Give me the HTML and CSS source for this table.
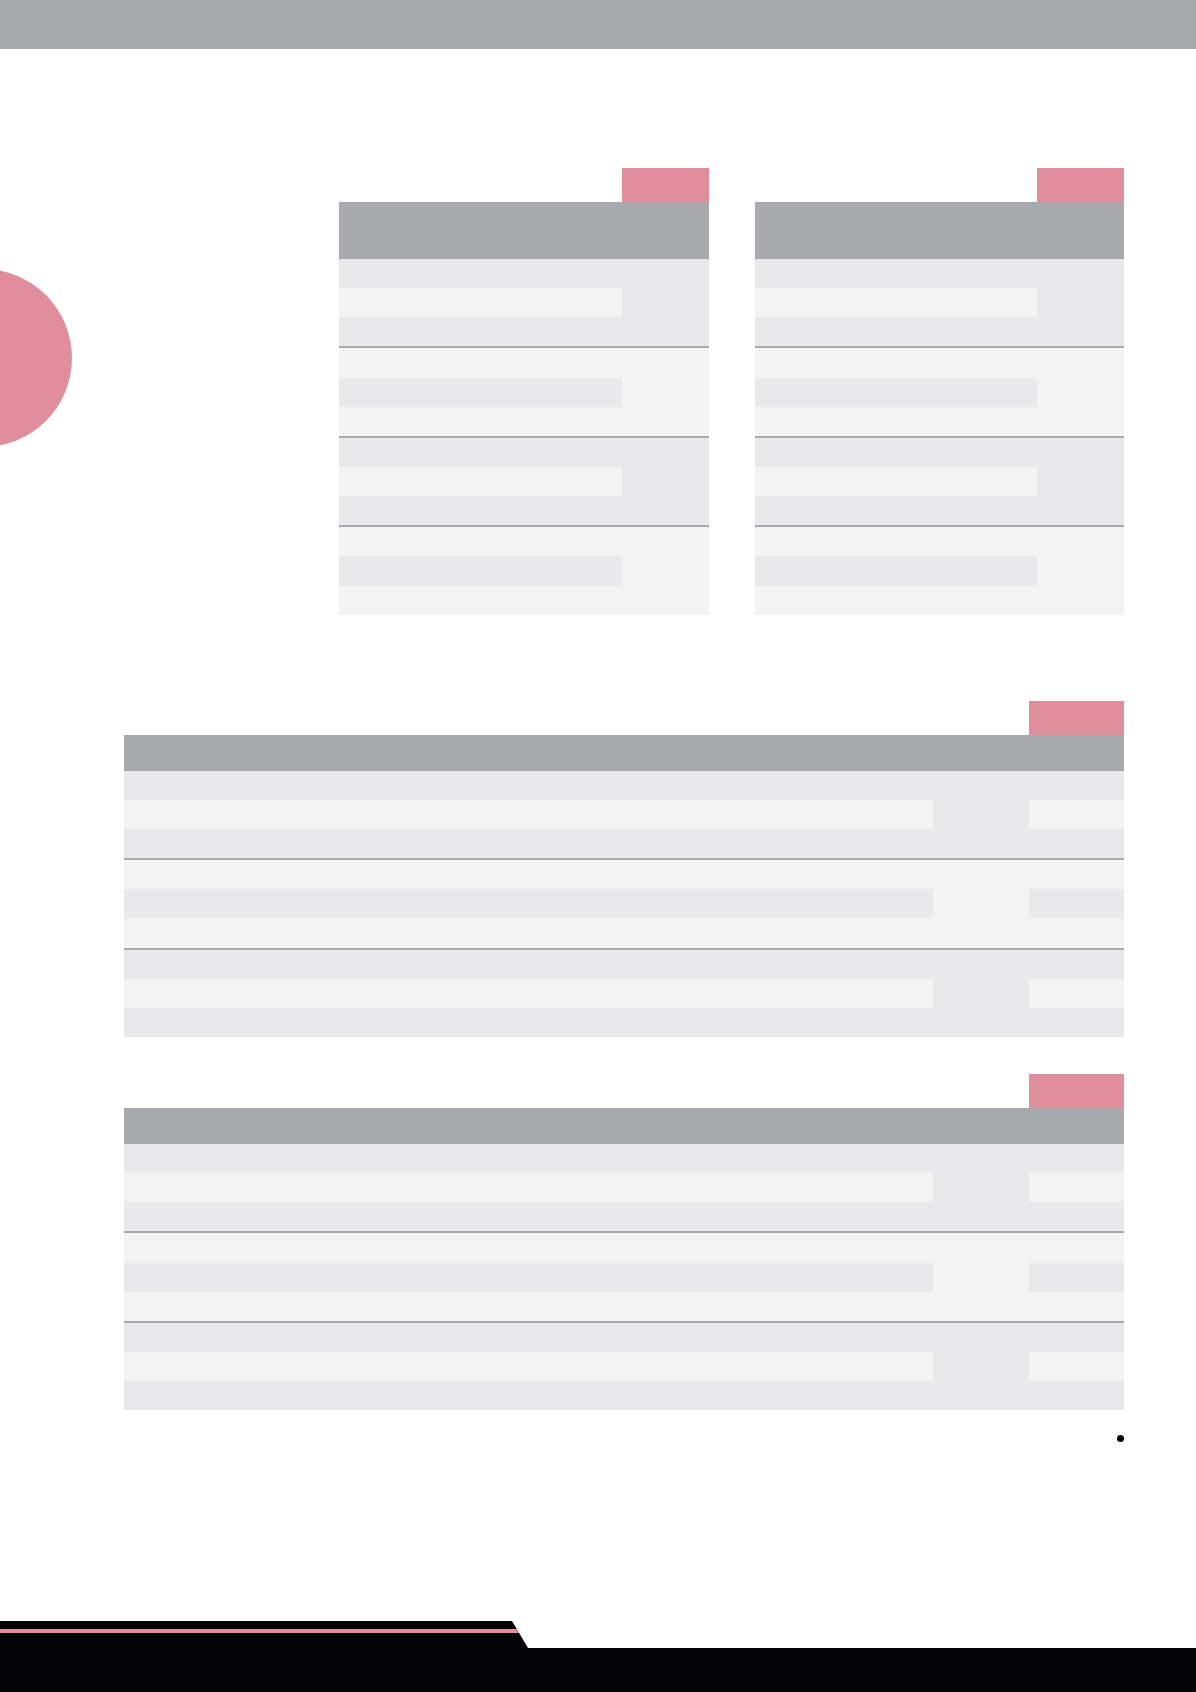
FILE: index.html
```html
<!DOCTYPE html>
<html lang="en">
<head>
<meta charset="utf-8">
<title>Tables</title>
<link rel="stylesheet" href="styles.css">
</head>
<body>
<div class="page">
  <div class="topbar"></div>
  <div class="blob"></div>

  <section class="pair">
    <div class="tbl small">
      <div class="tabrow"><div class="tab"></div></div>
      <div class="thead"></div>
      <div class="tbody">
        <div class="grp dark"><div class="row"></div><div class="row mid"><div class="c alt"></div><div class="c"></div></div><div class="row"></div></div>
        <div class="grp light"><div class="row"></div><div class="row mid"><div class="c alt"></div><div class="c"></div></div><div class="row"></div></div>
        <div class="grp dark"><div class="row"></div><div class="row mid"><div class="c alt"></div><div class="c"></div></div><div class="row"></div></div>
        <div class="grp light"><div class="row"></div><div class="row mid"><div class="c alt"></div><div class="c"></div></div><div class="row"></div></div>
      </div>
    </div>
    <div class="tbl small">
      <div class="tabrow"><div class="tab"></div></div>
      <div class="thead"></div>
      <div class="tbody">
        <div class="grp dark"><div class="row"></div><div class="row mid"><div class="c alt"></div><div class="c"></div></div><div class="row"></div></div>
        <div class="grp light"><div class="row"></div><div class="row mid"><div class="c alt"></div><div class="c"></div></div><div class="row"></div></div>
        <div class="grp dark"><div class="row"></div><div class="row mid"><div class="c alt"></div><div class="c"></div></div><div class="row"></div></div>
        <div class="grp light"><div class="row"></div><div class="row mid"><div class="c alt"></div><div class="c"></div></div><div class="row"></div></div>
      </div>
    </div>
  </section>

  <section class="wide first">
    <div class="tbl large">
      <div class="tabrow"><div class="tab"></div></div>
      <div class="thead"></div>
      <div class="tbody">
        <div class="grp dark"><div class="row"></div><div class="row mid"><div class="c alt"></div><div class="c"></div><div class="c alt"></div></div><div class="row"></div></div>
        <div class="grp light"><div class="row"></div><div class="row mid"><div class="c alt"></div><div class="c"></div><div class="c alt"></div></div><div class="row"></div></div>
        <div class="grp dark"><div class="row"></div><div class="row mid"><div class="c alt"></div><div class="c"></div><div class="c alt"></div></div><div class="row"></div></div>
      </div>
    </div>
  </section>

  <section class="wide second">
    <div class="tbl large">
      <div class="tabrow"><div class="tab"></div></div>
      <div class="thead"></div>
      <div class="tbody">
        <div class="grp dark"><div class="row"></div><div class="row mid"><div class="c alt"></div><div class="c"></div><div class="c alt"></div></div><div class="row"></div></div>
        <div class="grp light"><div class="row"></div><div class="row mid"><div class="c alt"></div><div class="c"></div><div class="c alt"></div></div><div class="row"></div></div>
        <div class="grp dark"><div class="row"></div><div class="row mid"><div class="c alt"></div><div class="c"></div><div class="c alt"></div></div><div class="row"></div></div>
      </div>
    </div>
  </section>

  <div class="dotrow"><span class="dot"></span></div>

  <footer class="footer">
    <svg class="footer-art" width="1196" height="71" viewBox="0 0 1196 71" aria-hidden="true">
      <polygon points="0,0 512,0 528,27 1196,27 1196,71 0,71" fill="#030305"/>
      <polygon points="0,8 516.7,8 519.1,12 0,12" fill="#e08e9b"/>
    </svg>
  </footer>
</div>
</body>
</html>
```

FILE: styles.css
```css
html, body {
  margin: 0;
  padding: 0;
  background: #ffffff;
  font-family: "Liberation Sans", Arial, sans-serif;
}

.page {
  position: relative;
  width: 1196px;
  min-height: 1692px;
  display: flex;
  flex-direction: column;
  overflow: hidden;
}

.topbar {
  height: 49px;
  background: #a8a9ad;
  flex: none;
}

.blob {
  position: absolute;
  left: -106px;
  top: 269px;
  width: 178px;
  height: 178px;
  border-radius: 50%;
  background: #e08e9b;
}

.pair {
  margin: 119px 0 0 339px;
  width: 785px;
  display: grid;
  grid-template-columns: 1fr 1fr;
  column-gap: 46px;
}

.wide {
  margin-left: 124px;
  width: 1000px;
}

.wide.first { margin-top: 86px; }
.wide.second { margin-top: 37px; }

.tabrow {
  display: flex;
  justify-content: flex-end;
}

.tab {
  height: 34px;
  background: #e08e9b;
}

.small .tab { width: 87px; }
.large .tab { width: 95px; }

.thead { background: #a8a9ad; }
.small .thead { height: 57px; }
.large .thead { height: 36px; }

.grp + .grp { border-top: 2px solid #a9a9ad; }

.row { height: 29.15px; }

.grp.dark { background: #e9e9eb; }
.grp.light { background: #f3f3f3; }

.small .row.mid {
  display: grid;
  grid-template-columns: 1fr 87px;
}

.large .row.mid {
  display: grid;
  grid-template-columns: 1fr 96px 95px;
}

.grp.dark .c.alt { background: #f3f3f3; }
.grp.light .c.alt { background: #e9e9eb; }

.dotrow {
  width: 1124px;
  margin-top: 25px;
  display: flex;
  justify-content: flex-end;
}

.dot {
  display: block;
  width: 7px;
  height: 7px;
  border-radius: 50%;
  background: #000000;
}

.footer {
  margin-top: auto;
  height: 71px;
  flex: none;
}

.footer-art { display: block; }
```
